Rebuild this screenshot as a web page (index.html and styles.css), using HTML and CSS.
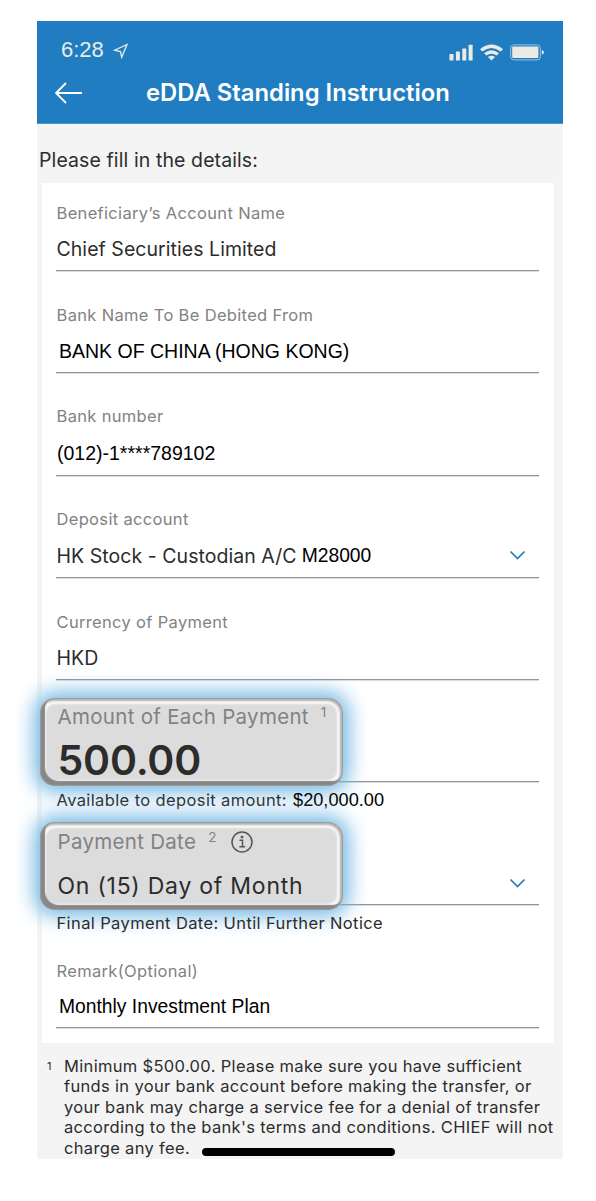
FILE: index.html
```html
<!DOCTYPE html>
<html lang="en">

<head>
    <meta charset="UTF-8">
    <title>eDDA Standing Instruction</title>
    <link rel="stylesheet" href="styles.css">
</head>

<body>
<div class="phone">
    <header class="header">
        <div class="status">
            <span class="time">6:28</span>
            <svg class="location" width="16" height="16" viewBox="0 0 16 16">
                <path d="M14 1.500L1.500 7.200l6 1.300 1.200 5.800z" />
            </svg>
            <div class="status-icons">
                <svg width="24" height="17" viewBox="0 0 24 17">
                    <rect x="0.500" y="10" width="4" height="6.500" rx="0.500" />
                    <rect x="6.900" y="7.600" width="4" height="8.900" rx="0.500" />
                    <rect x="13.300" y="4.400" width="4" height="12.100" rx="0.500" />
                    <rect x="19.600" y="0.800" width="4" height="15.700" rx="0.500" />
                </svg>
                <svg width="23" height="17" viewBox="0 0 23 17">
                    <path d="M0 5.200Q11.500 -4 23 5.200L20.600 7.600Q11.500 0.500 2.400 7.600Z" />
                    <path d="M4 9.200Q11.500 3.300 19 9.200L16.500 11.600Q11.500 7.800 6.500 11.600Z" />
                    <path d="M8 13Q11.500 10.300 15 13L11.500 16.400Z" />
                </svg>
                <svg width="34" height="17" viewBox="0 0 34 17">
                    <rect class="battery" x="0.700" y="0.900" width="29.600" height="15" rx="3" />
                    <rect x="2.200" y="2.600" width="26.200" height="11.400" rx="1" />
                    <path d="M31.800 6Q34 6.700 34 8.300T31.800 10.600Z" />
                </svg>
            </div>
        </div>
        <div class="title-bar">
            <svg class="back" width="28" height="22" viewBox="0 0 28 22">
                <path d="M11 1L1 11l10 10M1 11h26" />
            </svg>
            <h1>eDDA Standing Instruction</h1>
        </div>
    </header>

    <p class="intro">Please fill in the details:</p>

    <div class="card">
        <div class="field first">
            <div class="label">Beneficiary’s Account Name</div>
            <div class="value">Chief Securities Limited</div>
        </div>
        <div class="field">
            <div class="label">Bank Name To Be Debited From</div>
            <div class="value plain bank">BANK OF CHINA (HONG KONG)</div>
        </div>
        <div class="field">
            <div class="label">Bank number</div>
            <div class="value plain number">(012)-1****789102</div>
        </div>
        <div class="field">
            <div class="label">Deposit account</div>
            <div class="value select">
                <span>HK Stock - Custodian A/C</span>
                <span class="plain account">M28000</span>
                <svg class="arrow" width="17" height="11" viewBox="0 0 17 11"><path d="M1.500 1.500l7 7 7-7" /></svg>
            </div>
        </div>
        <div class="field">
            <div class="label">Currency of Payment</div>
            <div class="value">HKD</div>
        </div>
        <div class="field marked">
            <div class="highlight"></div>
            <div class="label">Amount of Each Payment<sup>1</sup></div>
            <div class="value amount">500.00</div>
        </div>
        <div class="hint">Available to deposit amount: <span class="plain">$20,000.00</span></div>
        <div class="field marked date">
            <div class="highlight"></div>
            <div class="label">Payment Date<sup>2</sup>
                <svg class="info" width="24" height="24" viewBox="0 0 24 24">
                    <circle cx="12" cy="12" r="10" />
                    <path d="M9.500 10.200h3v6.500M9.300 16.800h5.800" />
                    <path d="M10.700 7h2.600" class="dot" />
                </svg>
            </div>
            <div class="value select">
                <span>On (15) Day of Month</span>
                <svg class="arrow" width="17" height="11" viewBox="0 0 17 11"><path d="M1.500 1.500l7 7 7-7" /></svg>
            </div>
        </div>
        <div class="hint final">Final Payment Date: Until Further Notice</div>
        <div class="field remark">
            <div class="label">Remark(Optional)</div>
            <div class="value plain">Monthly Investment Plan</div>
        </div>
    </div>

    <div class="note">
        <span class="num">1</span>
        <p>Minimum $500.00. Please make sure you have sufficient<br>
            funds in your bank account before making the transfer, or<br>
            your bank may charge a service fee for a denial of transfer<br>
            according to the bank's terms and conditions. CHIEF will not<br>
            charge any fee.</p>
    </div>
    <div class="home-bar"></div>
</div>
</body>

</html>
```

FILE: styles.css
```css
* {
    box-sizing: border-box;
}

body {
    margin: 0;
    background-color: white;
    font-family: Inter, "Liberation Sans", sans-serif;
    color: #2c2c2c;
}

h1,
p {
    margin: 0;
}

.phone {
    position: relative;
    width: 526px;
    height: 1138px;
    margin: 21px 0 0 37px;
    background-color: #f4f4f4;
}

.header {
    height: 103px;
    padding-top: 17px;
    background-color: #207dc1;
    border-bottom: 1px solid #4e98cd;
    color: white;
}

.status {
    display: flex;
    height: 24px;
    padding: 0 19px 0 24px;
    align-items: center;
}

.time {
    font: 22px/24px "Liberation Sans", sans-serif;
    color: #ebebe6;
}

.location {
    margin: 2px 0 0 9px;
    fill: none;
    stroke: #ebebe6;
    stroke-width: 1.3;
}

.status-icons {
    display: flex;
    gap: 7px;
    margin: 4px 0 0 auto;
    fill: #ebebe6;
}

.battery {
    fill: none;
    stroke: #9dc3dd;
}

.title-bar {
    display: flex;
    height: 62px;
    padding-left: 18px;
}

.back {
    margin-top: 20px;
    fill: none;
    stroke: white;
    stroke-width: 1.8;
}

.title-bar h1 {
    margin-left: 63px;
    font-size: 23.8px;
    font-weight: 600;
    line-height: 61px;
    white-space: nowrap;
}

.intro {
    height: 59px;
    padding: 24px 0 0 2px;
    font-size: 19.5px;
    line-height: 24px;
    letter-spacing: 0.1px;
}

.card {
    width: 512px;
    height: 860px;
    margin-left: 5px;
    padding: 0 15px 0 14px;
    background-color: white;
}

.field {
    position: relative;
    display: flex;
    flex-direction: column;
    justify-content: flex-end;
    height: 102.3px;
    border-bottom: 1px solid #969696;
    box-shadow: 0 1px #dcdcdc;
    white-space: nowrap;
}

.field.first {
    height: 88px;
}

.label {
    margin-bottom: 14.5px;
    padding-left: 0.5px;
    font-size: 16.5px;
    line-height: 20px;
    letter-spacing: 0.33px;
    color: #828282;
}

.value {
    height: 24px;
    margin-bottom: 9px;
    padding-left: 0.5px;
    font-size: 19.5px;
    line-height: 24px;
    letter-spacing: 0.05px;
}

.plain {
    font-family: "Liberation Sans", sans-serif;
    letter-spacing: 0;
    color: #000;
}

.bank {
    padding-left: 3px;
}

.number {
    padding-left: 1px;
    margin-bottom: 10px;
}

.select {
    display: flex;
    align-items: center;
}

.account {
    margin-left: 5px;
    font-size: 19.3px;
}

.arrow {
    margin: 0 13px 0 auto;
    fill: none;
    stroke: #207dc1;
    stroke-width: 1.7;
}

/* raised boxes around the amount and the date */
.highlight {
    position: absolute;
    left: -16px;
    bottom: -5px;
    width: 303px;
    height: 88px;
    border-radius: 15px;
    background-color: #dcdcdc;
    box-shadow: 0 0 20px 6px #74b8e4,
        inset 0 0 1px 1px #9c9c9c,
        inset 4px -4px 1px 1px #878787,
        inset -1px 1px 2px 2px #b4b4b4,
        inset 0 0 2px 6px #fafafa;
}

.marked .label,
.marked .value {
    position: relative;
    padding-left: 1.5px;
}

.marked .label {
    margin-bottom: 10px;
    font-size: 20.5px;
    line-height: 24px;
    letter-spacing: 0.3px;
}

.marked sup {
    margin-left: 12px;
    font-size: 13.5px;
    line-height: 0;
    vertical-align: 7px;
}

.amount {
    height: 42px;
    margin-bottom: 0;
    font-size: 41px;
    font-weight: 600;
    line-height: 42px;
    letter-spacing: -0.2px;
}

.hint {
    position: relative;
    height: 36px;
    padding: 8px 0 0 0.5px;
    font-size: 16.5px;
    line-height: 20px;
    letter-spacing: 0.38px;
    white-space: nowrap;
}

.hint .plain {
    margin-left: 1px;
    font-size: 18.2px;
    line-height: 18px;
}

.field.date {
    height: 87px;
}

.date .highlight {
    bottom: -6px;
}

.date .label {
    display: flex;
    align-items: center;
    margin-bottom: 20px;
}

.date sup {
    position: relative;
    top: -5px;
}

.date .value {
    margin-bottom: 6px;
    font-size: 23px;
    letter-spacing: 0.75px;
}

.date .arrow {
    margin-bottom: 6px;
}

.info {
    margin-left: 13px;
    fill: none;
    stroke: #555;
    stroke-width: 1.5;
}

.info .dot {
    stroke-width: 2.4;
}

.hint.final {
    height: 35px;
}

.field.remark {
    height: 88px;
}

.remark .value {
    padding-left: 3px;
    margin-bottom: 8px;
    font-size: 19.3px;
}

.note {
    display: flex;
    padding: 12.500px 0 0 10px;
    font-size: 16.5px;
    line-height: 20.6px;
    letter-spacing: 0.33px;
    white-space: nowrap;
}

.num {
    width: 17px;
    font-size: 11px;
}

.home-bar {
    position: absolute;
    left: 165px;
    bottom: 3px;
    width: 193px;
    height: 8px;
    border-radius: 4px;
    background-color: black;
}
```
